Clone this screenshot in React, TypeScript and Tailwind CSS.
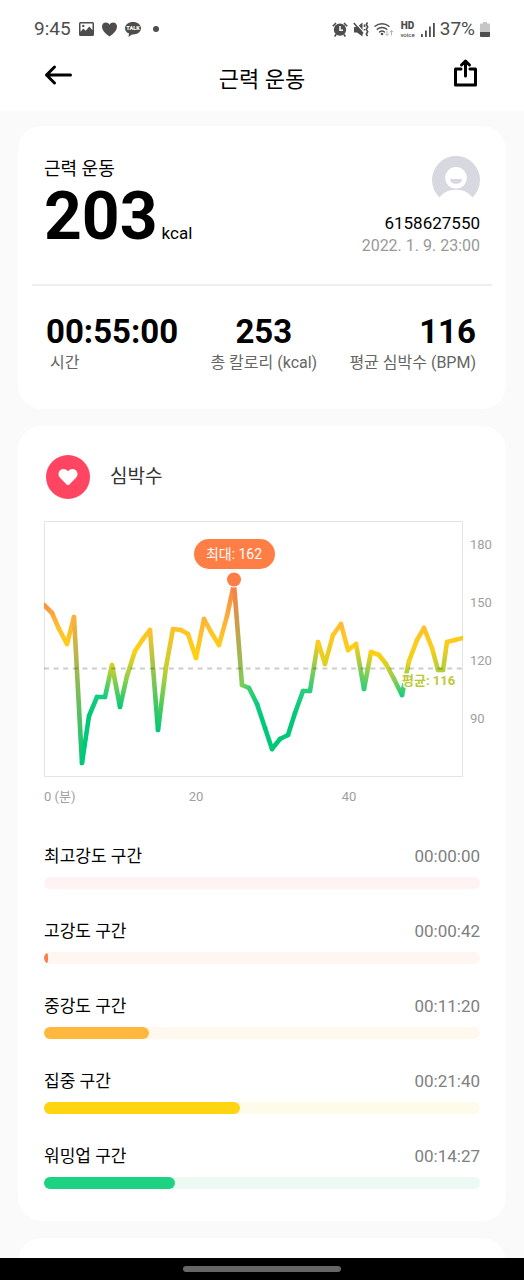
import React from "react";

type Point = [number, number];

const POINTS: Point[] = [
  [0, 84], [8, 92], [15, 108], [23, 123], [30, 96], [38, 242], [45, 195], [53, 176], [61, 176], [68, 144],
  [76, 186], [83, 155], [91, 130], [99, 118], [106, 109], [114, 209], [122, 146], [129, 108], [137, 109], [144, 113],
  [152, 137], [160, 98], [167, 111], [175, 124], [183, 95], [190, 63], [198, 164], [205, 167], [213, 183], [221, 207],
  [228, 228], [236, 218], [244, 214], [251, 192], [259, 170], [266, 170], [274, 121], [281, 143], [289, 114], [297, 103],
  [304, 129], [312, 123], [320, 168], [327, 131], [335, 134], [342, 143], [350, 158], [358, 174], [365, 140], [373, 119],
  [380, 107], [388, 127], [394, 149], [399, 149], [403, 121], [411, 119], [419, 117],
];

const STOPS: [number, number[]][] = [
  [62, [255, 126, 69]],
  [84, [250, 146, 62]],
  [100, [255, 184, 58]],
  [112, [253, 199, 36]],
  [138, [255, 210, 15]],
  [150, [170, 208, 60]],
  [164, [125, 205, 85]],
  [168, [45, 206, 125]],
  [176, [20, 204, 130]],
  [195, [0, 200, 120]],
];

function colorAt(y: number): string {
  if (y <= STOPS[0][0]) return `rgb(${STOPS[0][1].join(",")})`;
  for (let i = 1; i < STOPS.length; i++) {
    const [y1, c1] = STOPS[i];
    const [y0, c0] = STOPS[i - 1];
    if (y <= y1) {
      const t = (y - y0) / (y1 - y0);
      return `rgb(${c0.map((c, k) => Math.round(c + (c1[k] - c) * t)).join(",")})`;
    }
  }
  return `rgb(${STOPS[STOPS.length - 1][1].join(",")})`;
}

function HeartRateChart() {
  return (
    <svg
      viewBox="0 0 448 290"
      className="block w-full font-['Roboto','Noto_Sans_CJK_KR',sans-serif]"
      role="img"
      aria-label="심박수"
    >
      <defs>
        {POINTS.slice(1).map(([x, y], i) => (
          <linearGradient
            key={i}
            id={`seg${i}`}
            gradientUnits="userSpaceOnUse"
            x1={POINTS[i][0]}
            y1={POINTS[i][1]}
            x2={x}
            y2={y}
          >
            <stop offset="0" stopColor={colorAt(POINTS[i][1])} />
            <stop offset="1" stopColor={colorAt(y)} />
          </linearGradient>
        ))}
        <clipPath id="plot">
          <rect x="0" y="0" width="419" height="257" />
        </clipPath>
      </defs>
      <rect x="0.5" y="0.5" width="418" height="255" fill="none" stroke="#e4e4e4" />
      <g clipPath="url(#plot)" strokeWidth="4.6" strokeLinecap="round">
        {POINTS.slice(1).map(([x, y], i) => (
          <line key={i} x1={POINTS[i][0]} y1={POINTS[i][1]} x2={x} y2={y} stroke={`url(#seg${i})`} />
        ))}
      </g>
      <line x1="0" y1="147.5" x2="419" y2="147.5" stroke="#000" strokeOpacity="0.2" strokeWidth="2" strokeDasharray="5 4.6" />
      <circle cx="190" cy="58.5" r="8" fill="#fff" />
      <circle cx="190" cy="58.5" r="7" fill="#ff7e45" />
      <rect x="150" y="18" width="81" height="30" rx="15" fill="#ff7e45" />
      <text x="190" y="38" fontSize="14" fill="#fff" textAnchor="middle">최대: 162</text>
      <text x="358" y="164" fontSize="13" fontWeight="700" fill="#bcc935" stroke="#fff" strokeWidth="3" paintOrder="stroke">
        평균: 116
      </text>
      <g fontSize="13" fill="#a0a0a0">
        <text x="426" y="28">180</text>
        <text x="426" y="86">150</text>
        <text x="426" y="144">120</text>
        <text x="426" y="202">90</text>
        <text x="0" y="280">0 (분)</text>
        <text x="152" y="280" textAnchor="middle">20</text>
        <text x="305" y="280" textAnchor="middle">40</text>
      </g>
    </svg>
  );
}

const ZONES = [
  { name: "최고강도 구간", time: "00:00:00", percent: 0, track: "bg-[#fff3f3]", fill: "bg-[#ff4a5f]" },
  { name: "고강도 구간", time: "00:00:42", percent: 1, track: "bg-[#fff5f1]", fill: "bg-[#f9804c]" },
  { name: "중강도 구간", time: "00:11:20", percent: 24, track: "bg-[#fff8ee]", fill: "bg-[#ffb83d]" },
  { name: "집중 구간", time: "00:21:40", percent: 45, track: "bg-[#fffbea]", fill: "bg-[#ffd410]" },
  { name: "워밍업 구간", time: "00:14:27", percent: 30, track: "bg-[#edfaf4]", fill: "bg-[#1dd282]" },
];

function StatusBar() {
  return (
    <div className="flex h-[58px] items-center justify-between px-[34px] text-[19px] text-[#4d4d4d]">
      <div className="flex items-center gap-2">
        <span>9:45</span>
        <svg width="15" height="14" viewBox="0 0 15 14" aria-hidden="true">
          <path
            fillRule="evenodd"
            fill="currentColor"
            d="M1.5 0h12A1.5 1.5 0 0 1 15 1.5v11a1.5 1.5 0 0 1-1.5 1.5h-12A1.5 1.5 0 0 1 0 12.5v-11A1.5 1.5 0 0 1 1.5 0ZM1.5 1.5v8.2l2.8-3.2 2.4 2.3 3.6-4.3 3.2 3.7V1.5Zm2.8 1.2a1.2 1.2 0 1 1 0 2.4 1.2 1.2 0 0 1 0-2.4Z"
          />
        </svg>
        <svg width="15" height="15" viewBox="0 0 15 15" aria-hidden="true">
          <path
            fill="currentColor"
            d="M7.5 14.5C5.5 13 0 9.5 0 4.6 0 2 1.8.5 3.8.5c1.6 0 2.9.8 3.7 2.2C8.3 1.3 9.6.5 11.2.5c2 0 3.8 1.5 3.8 4.1 0 4.9-5.5 8.4-7.5 9.9Z"
          />
        </svg>
        <svg width="16" height="15" viewBox="0 0 16 15" aria-hidden="true">
          <path fill="currentColor" d="M8 0c4.5 0 8 2.7 8 6.2s-3.5 6.2-8 6.2h-1L3.4 15l.7-3.4C1.6 10.6 0 8.6 0 6.2 0 2.7 3.5 0 8 0Z" />
          <text x="8" y="8.2" textAnchor="middle" fontSize="5.5" fontWeight="900" fill="#fff">TALK</text>
        </svg>
        <span className="ml-1 size-[6px] rounded-full bg-[#4d4d4d]" />
      </div>
      <div className="flex items-center gap-[5px]">
        <svg width="16" height="15" viewBox="0 0 16 15" fill="none" stroke="currentColor" aria-hidden="true">
          <circle cx="8" cy="7.6" r="6.2" fill="currentColor" stroke="none" />
          <path strokeWidth="1.6" d="M.8 4.2 4 1M15.2 4.2 12 1M4.3 12.2l-1.7 2.3M11.7 12.2l1.7 2.3" />
          <path stroke="#fff" strokeWidth="1.5" d="M8 4v4.3h3" />
        </svg>
        <svg width="16" height="15" viewBox="0 0 16 15" fill="none" stroke="currentColor" aria-hidden="true">
          <path fill="currentColor" stroke="none" d="M1 5h3l5.5-4.500v14L4 10.500H1Z" />
          <path stroke="#fff" strokeWidth="1.2" d="M2.2.5 11 10.500" />
          <path strokeWidth="1.6" d="M.8 1 10 11.500" />
          <path strokeWidth="1.6" d="M11.500 2.500v2.500M11.500 7v1.500" />
          <path strokeWidth="1.6" d="m14.500.5-1.200 2L14.700 5l-1.400 2.300 1.400 2.400-1.400 2.300 1.200 2.200" />
        </svg>
        <svg width="20" height="15" viewBox="0 0 20 15" fill="none" stroke="currentColor" aria-hidden="true">
          <path strokeWidth="1.4" strokeLinecap="round" d="M1 4.300a11 11 0 0 1 14 0M3.200 7.300a7.400 7.400 0 0 1 9.600 0M5.500 10a4 4 0 0 1 5 0" />
          <circle cx="8" cy="12" r="1.3" fill="currentColor" stroke="none" />
          <path stroke="#b5b5b5" d="M13 8.500v5M11.300 11.800 13 13.500l1.700-1.700M17.500 13.500v-5M15.800 10.200l1.700-1.700 1.700 1.700" />
        </svg>
        <svg width="17" height="20" viewBox="0 0 17 20" aria-hidden="true">
          <text x="8.5" y="9.5" textAnchor="middle" fontSize="10" fontWeight="900" fill="currentColor">HD</text>
          <text x="8.5" y="17.5" textAnchor="middle" fontSize="6" fontWeight="500" fill="currentColor">voice</text>
        </svg>
        <svg width="14" height="15" viewBox="0 0 14 15" fill="currentColor" aria-hidden="true">
          <path d="M0 12h1.8v3H0ZM4 8.5h1.8V15H4ZM8 4.5h1.8V15H8ZM12 1h1.8v14H12Z" />
        </svg>
        <span>37%</span>
        <svg width="10" height="15" viewBox="0 0 10 15" aria-hidden="true">
          <path fill="#c6c6c6" d="M3 0h4v1.5h2a1 1 0 0 1 1 1V10H0V2.5a1 1 0 0 1 1-1h2Z" />
          <path fill="#4d4d4d" d="M0 10h10v4a1 1 0 0 1-1 1H1a1 1 0 0 1-1-1Z" />
        </svg>
      </div>
    </div>
  );
}

function Stat({ value, label, className }: { value: string; label: string; className: string }) {
  return (
    <div className={`flex flex-col ${className}`}>
      <dt className="order-last text-[16px] leading-6 text-[#666]">{label}</dt>
      <dd className="text-[33px] leading-[39px] font-bold">{value}</dd>
    </div>
  );
}

export default function App() {
  return (
    <div className="flex h-screen flex-col bg-[#fafafa] font-['Roboto','Noto_Sans_CJK_KR',sans-serif] text-black">
      <header className="shrink-0 bg-white">
        <StatusBar />
        <div className="grid h-[53px] grid-cols-[1fr_auto_1fr] items-start px-11">
          <button type="button" aria-label="뒤로" className="mt-[6px] justify-self-start">
            <svg width="28" height="22" viewBox="0 0 28 22" fill="none" stroke="currentColor" strokeWidth="3" strokeLinecap="round" strokeLinejoin="round">
              <path d="M26.5 11H2.5M10.5 3l-8 8 8 8" />
            </svg>
          </button>
          <h1 className="mt-1 text-[22px] leading-9">근력 운동</h1>
          <button type="button" aria-label="공유" className="justify-self-end">
            <svg width="28" height="30" viewBox="0 0 28 30" fill="none" stroke="currentColor" strokeWidth="3" strokeLinecap="round" strokeLinejoin="round">
              <path d="M9 11H3.5v16h20V11H18M13.5 18V3.5M9.5 7l4-4 4 4" />
            </svg>
          </button>
        </div>
      </header>

      <main className="flex min-h-0 flex-1 flex-col gap-[17px] overflow-y-auto px-[18px] pt-[15px] [scrollbar-width:none]">
        <section className="shrink-0 rounded-3xl bg-white px-[14px] pt-[30px] pb-[34px]">
          <div className="flex justify-between border-b-2 border-[#eeeeee] px-3 pb-[27px]">
            <div className="flex flex-col">
              <h2 className="text-[18px] leading-[26px]">근력 운동</h2>
              <p className="mt-[2px] flex items-baseline gap-1 text-[17px]">
                <span className="text-[66px] leading-[66px] font-bold">203</span>
                kcal
              </p>
            </div>
            <div className="flex flex-col items-end">
              <svg width="48" height="48" viewBox="0 0 48 48" aria-hidden="true">
                <path
                  fill="#d8d8e0"
                  fillRule="evenodd"
                  d="M7.6 41.5a24 24 0 1 1 32.8 0C37 36.5 31 33.8 24 33.8S11 36.5 7.6 41.5ZM24 11a10.8 10.8 0 1 0 0 21.6A10.8 10.8 0 0 0 24 11Z"
                />
                <path fill="#d8d8e0" d="M18 23h12c0 3.2-2.8 4.8-6 4.8S18 26.2 18 23Z" />
              </svg>
              <span className="mt-2 text-[17px] leading-[22px]">6158627550</span>
              <time className="text-[16px] leading-[23px] text-[#999]">2022. 1. 9. 23:00</time>
            </div>
          </div>
          <dl className="flex justify-between pt-[26px] pr-4 pl-[14px]">
            <Stat value="00:55:00" label="시간" className="items-start [&>dt]:pl-1" />
            <Stat value="253" label="총 칼로리 (kcal)" className="items-center" />
            <Stat value="116" label="평균 심박수 (BPM)" className="items-end" />
          </dl>
        </section>

        <section className="shrink-0 rounded-3xl bg-white pt-[29px] pb-8">
          <div className="flex items-center gap-5 px-7">
            <span className="flex size-11 items-center justify-center rounded-full bg-[#ff4561]">
              <svg width="20" height="18" viewBox="0 0 20 18" aria-hidden="true">
                <path
                  fill="#fff"
                  d="M8.6 16.4 2 9.7C-.2 7.4.2 4 2.2 2.3c2.3-2 5.5-1.5 7.8.9 2.3-2.4 5.5-2.9 7.8-.9 2 1.7 2.4 5.1.2 7.4l-6.6 6.7c-.8.8-2 .8-2.8 0Z"
                />
              </svg>
            </span>
            <h2 className="text-[19px] text-[#333]">심박수</h2>
          </div>
          <div className="mt-[22px] pr-[14px] pl-[26px]">
            <HeartRateChart />
          </div>
          <ul className="mt-[31px] flex flex-col gap-7 px-[26px]">
            {ZONES.map((zone) => (
              <li key={zone.name} className="flex flex-col gap-[6px]">
                <div className="flex justify-between text-[17px] leading-[29px]">
                  <span>{zone.name}</span>
                  <span className="text-[#808080]">{zone.time}</span>
                </div>
                <div className={`h-3 overflow-hidden rounded-full ${zone.track}`}>
                  <div className={`h-full rounded-r-full ${zone.fill}`} style={{ width: `${zone.percent}%` }} />
                </div>
              </li>
            ))}
          </ul>
        </section>

        <section className="h-40 shrink-0 rounded-3xl bg-white" />
      </main>

      <footer className="flex h-[22px] shrink-0 items-center justify-center bg-black">
        <span className="h-[6px] w-[30%] rounded-full bg-[#666]" />
      </footer>
    </div>
  );
}
